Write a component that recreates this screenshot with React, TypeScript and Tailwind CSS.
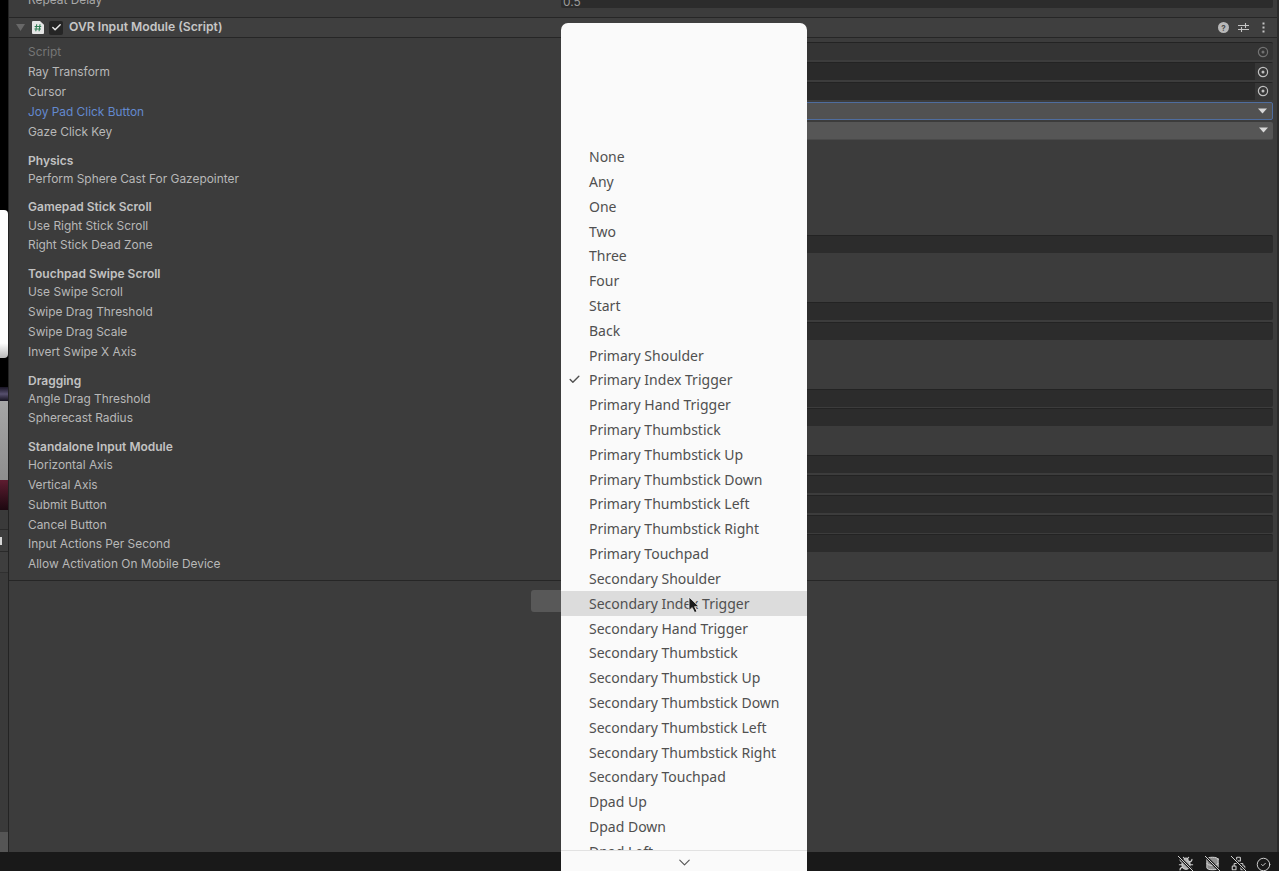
import React from "react";
import { Check, ChevronDown, CircleCheck, Bug, Database, Network } from "lucide-react";

type RowT = { label: string; kind?: "obj" | "objDim" | "drop" | "dropBlue" | "text"; head?: boolean; tone?: string };

const rows: RowT[] = [
  { label: "Script", kind: "objDim", tone: "text-[#767676]" },
  { label: "Ray Transform", kind: "obj" },
  { label: "Cursor", kind: "obj" },
  { label: "Joy Pad Click Button", kind: "dropBlue", tone: "text-[#6389cf]" },
  { label: "Gaze Click Key", kind: "drop" },
  { label: "Physics", head: true },
  { label: "Perform Sphere Cast For Gazepointer" },
  { label: "Gamepad Stick Scroll", head: true },
  { label: "Use Right Stick Scroll" },
  { label: "Right Stick Dead Zone", kind: "text" },
  { label: "Touchpad Swipe Scroll", head: true },
  { label: "Use Swipe Scroll" },
  { label: "Swipe Drag Threshold", kind: "text" },
  { label: "Swipe Drag Scale", kind: "text" },
  { label: "Invert Swipe X Axis" },
  { label: "Dragging", head: true },
  { label: "Angle Drag Threshold", kind: "text" },
  { label: "Spherecast Radius", kind: "text" },
  { label: "Standalone Input Module", head: true },
  { label: "Horizontal Axis", kind: "text" },
  { label: "Vertical Axis", kind: "text" },
  { label: "Submit Button", kind: "text" },
  { label: "Cancel Button", kind: "text" },
  { label: "Input Actions Per Second", kind: "text" },
  { label: "Allow Activation On Mobile Device" },
];

const menu = [
  "None", "Any", "One", "Two", "Three", "Four", "Start", "Back",
  "Primary Shoulder", "Primary Index Trigger", "Primary Hand Trigger", "Primary Thumbstick",
  "Primary Thumbstick Up", "Primary Thumbstick Down", "Primary Thumbstick Left", "Primary Thumbstick Right",
  "Primary Touchpad", "Secondary Shoulder", "Secondary Index Trigger", "Secondary Hand Trigger",
  "Secondary Thumbstick", "Secondary Thumbstick Up", "Secondary Thumbstick Down", "Secondary Thumbstick Left",
  "Secondary Thumbstick Right", "Secondary Touchpad", "Dpad Up", "Dpad Down", "Dpad Left",
];

function Target({ dim }: { dim?: boolean }) {
  return (
    <svg width="12" height="12" viewBox="0 0 12 12" fill="none" className={dim ? "opacity-40" : "opacity-90"}>
      <circle cx="6" cy="6" r="4.6" stroke="#d0d0d0" strokeWidth="1.2" />
      <circle cx="6" cy="6" r="1.5" fill="#d0d0d0" />
    </svg>
  );
}

function Caret() {
  return (
    <svg width="9" height="6" viewBox="0 0 9 6">
      <path d="M0 0.5H9L4.5 5.5Z" fill="#d8d8d8" />
    </svg>
  );
}

function Field({ kind }: { kind: NonNullable<RowT["kind"]> }) {
  if (kind === "drop" || kind === "dropBlue") {
    return (
      <div
        className={
          "h-[18px] -mt-[2px] flex-1 flex items-center justify-end pr-[5px] rounded-[2px] " +
          (kind === "dropBlue" ? "border border-[#4f6d9e] bg-[#515151]" : "bg-[#565656] border-b border-[#4a4a4a]")
        }
      >
        <Caret />
      </div>
    );
  }
  if (kind === "text") {
    return <div className="h-[18px] -mt-[2px] flex-1 rounded-[2px] bg-[#2c2c2c] border-t border-[#232323]" />;
  }
  return (
    <div className={"h-[18px] -mt-[2px] flex-1 flex justify-end rounded-[2px] border-t border-[#232323] " + (kind === "objDim" ? "bg-[#343434]" : "bg-[#2a2a2a]")}>
      <div className={"w-[18px] h-full pr-[2px] flex items-center justify-center " + (kind === "objDim" ? "" : "bg-[#363636]")}>
        <Target dim={kind === "objDim"} />
      </div>
    </div>
  );
}

function Row({ r }: { r: RowT }) {
  if (r.head) {
    return (
      <div className="h-[16.15px] mt-[11px] flex items-center pl-[19px] text-[12px] font-semibold text-[#c2c2c2]">{r.label}</div>
    );
  }
  return (
    <div className={"h-[19.8px] flex items-center pl-[19px] pr-[4px] " + (r.tone ?? "text-[#b8b8b8]")}>
      <span className="w-[533px] shrink-0 whitespace-nowrap">{r.label}</span>
      {r.kind && <Field kind={r.kind} />}
    </div>
  );
}

function LeftStrip() {
  return (
    <div className="w-[8px] shrink-0 flex flex-col bg-black">
      <div className="h-[210px] shrink-0" />
      <div className="h-[148px] shrink-0 rounded-r-[4px] bg-gradient-to-b from-white from-[90%] to-[#b9b9b9]" />
      <div className="h-[29px] shrink-0" />
      <div className="h-[14px] shrink-0 bg-gradient-to-b from-[#1a1626] via-[#57506e] to-[#161320]" />
      <div className="h-[79px] shrink-0 bg-gradient-to-b from-[#a6a6a6] to-[#8e8e8e]" />
      <div className="h-[30px] shrink-0 bg-gradient-to-b from-[#5e1c30] to-[#1c0810]" />
      <div className="h-[20px] shrink-0 bg-[#3a3a3a] border-b border-[#2a2a2a]" />
      <div className="h-[22px] shrink-0 bg-[#3e3e3e] border-b border-[#2a2a2a] flex items-center">
        <div className="w-[2px] h-[8px] bg-[#d8d8d8]" />
      </div>
      <div className="h-[20px] shrink-0 bg-[#3e3e3e]" />
      <div className="flex-1 bg-[#3a3a3a] border-t border-[#303030]" />
      <div className="h-[20px] shrink-0 bg-[#555555]" />
    </div>
  );
}

function Inspector() {
  return (
    <div className="flex-1 min-w-0 flex flex-col overflow-hidden bg-[#3c3c3c] border-l border-[#232323] border-r-2 border-r-[#2b2b2b] text-[11.9px] font-['Inter',sans-serif] leading-none">
      <div className="-mt-[10px] h-[19px] shrink-0 flex items-center pl-[19px] pr-[4px] text-[#a8a8a8]">
        <span className="w-[533px] shrink-0">Repeat Delay</span>
        <div className="h-[16px] flex-1 rounded-[2px] bg-[#2c2c2c] pl-[2px] pt-[4px] text-[#9a9a9a]">0.5</div>
      </div>
      <div className="mt-[8px] h-[21px] shrink-0 flex items-center border-y border-[#262626] bg-[#3f3f3f]">
        <svg width="9" height="7" viewBox="0 0 9 7" className="ml-[7px]">
          <path d="M0 0H9L4.5 7Z" fill="#686868" />
        </svg>
        <svg width="12" height="13" viewBox="0 0 12 14" preserveAspectRatio="none" className="ml-[7px]">
          <path d="M0 1C0 .4 .4 0 1 0H8L12 4V13C12 13.6 11.6 14 11 14H1C.4 14 0 13.6 0 13Z" fill="#e6e6e6" />
          <path d="M4.7 3.5L3.8 11M8 3.5L7.1 11M2.6 5.8H9.2M2.4 8.7H9" stroke="#2f7d54" strokeWidth="1.1" fill="none" />
        </svg>
        <div className="ml-[5px] w-[14px] h-[14px] rounded-[2px] bg-[#252525] flex items-center justify-center">
          <Check size={11} strokeWidth={3.2} color="#e8e8e8" />
        </div>
        <span className="ml-[6px] text-[12.2px] font-semibold text-[#c6c6c6]">OVR Input Module (Script)</span>
        <div className="ml-auto flex items-center pr-[12px]">
          <span className="w-[11px] h-[11px] rounded-full bg-[#b8b8b8] text-[#4a4a4a] text-[8px] font-bold flex items-center justify-center">?</span>
          <svg width="11" height="11" viewBox="0 0 11 11" className="ml-[9px]">
            <path d="M0 3.5H11M0 7.5H11M7.5 1V6M3.5 5V10" stroke="#c4c4c4" strokeWidth="1.1" fill="none" />
          </svg>
          <svg width="3" height="11" viewBox="0 0 3 11" className="ml-[13px]">
            <rect x="0.5" y="0.5" width="2" height="2" fill="#c4c4c4" />
            <rect x="0.5" y="4.5" width="2" height="2" fill="#c4c4c4" />
            <rect x="0.5" y="8.5" width="2" height="2" fill="#c4c4c4" />
          </svg>
        </div>
      </div>
      <div className="mt-[4.5px] shrink-0 flex flex-col">
        {rows.map((r) => (
          <Row key={r.label} r={r} />
        ))}
      </div>
      <div className="mt-[6px] border-t border-[#262626]" />
      <div className="mt-[9px] flex justify-center">
        <div className="w-[225px] h-[22px] rounded-[3px] bg-[#585858]" />
      </div>
    </div>
  );
}

function Popup() {
  return (
    <div className="absolute left-[561px] top-[23px] w-[246px] h-[848px] flex flex-col rounded-t-[7px] bg-[#fafafa] font-['Noto_Sans',sans-serif] text-[14px] text-[#505050]">
      <div className="flex-1 min-h-0 overflow-hidden pt-[121.2px]">
        {menu.map((m) => (
          <div
            key={m}
            className={
              "h-[24.82px] flex items-center pl-[28px] whitespace-nowrap relative " +
              (m === "Secondary Index Trigger" ? "bg-[#dcdcdc]" : "")
            }
          >
            {m === "Primary Index Trigger" && (
              <Check size={13} strokeWidth={2.6} color="#505050" className="absolute left-[7px] top-[5px]" />
            )}
            {m}
          </div>
        ))}
      </div>
      <div className="h-[21px] shrink-0 pt-[3px] flex items-center justify-center border-t border-[#e2e2e2]">
        <ChevronDown size={19} strokeWidth={1.4} color="#555555" />
      </div>
      <svg width="13" height="18" viewBox="0 0 13 18" className="absolute left-[127px] top-[573px]">
        <path d="M1 1V14.5L4.2 11.6L6.6 16.6L9 15.5L6.6 10.7H11Z" fill="#1c1c1c" stroke="#f0f0f0" strokeWidth="0.8" />
      </svg>
    </div>
  );
}

function Struck({ children }: { children: React.ReactNode }) {
  return (
    <div className="relative w-[17px] h-[17px] flex items-center justify-center">
      {children}
      <svg width="17" height="17" viewBox="0 0 17 17" className="absolute inset-0">
        <path d="M1 1L16 16" stroke="#191919" strokeWidth="2.6" />
        <path d="M1 1L16 16" stroke="#d0d0d0" strokeWidth="1" />
      </svg>
    </div>
  );
}

function StatusBar() {
  return (
    <div className="h-[19px] shrink-0 overflow-hidden pt-[4px] flex items-center justify-end pr-[8px] bg-[#191919]">
      <Struck><Bug size={16} color="#cfcfcf" fill="#b0b0b0" strokeWidth={1.6} /></Struck>
      <div className="ml-[10px]">
        <Struck><Database size={15} color="#d8d8d8" fill="#8e8e8e" strokeWidth={1.6} /></Struck>
      </div>
      <div className="ml-[9px]">
        <Struck><Network size={15} color="#c8c8c8" strokeWidth={1.8} /></Struck>
      </div>
      <CircleCheck size={15} color="#d8d8d8" strokeWidth={1.5} className="ml-[9px] mt-[1px]" />
    </div>
  );
}

export default function App() {
  return (
    <div className="relative w-[1279px] h-[871px] overflow-hidden flex flex-col bg-[#191919]">
      <div className="flex-1 min-h-0 flex">
        <LeftStrip />
        <Inspector />
      </div>
      <StatusBar />
      <Popup />
    </div>
  );
}
